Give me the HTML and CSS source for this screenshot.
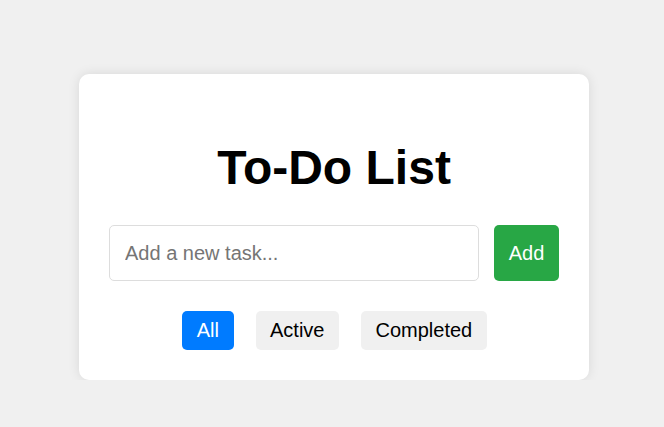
FILE: index.html
```html
<!DOCTYPE html>
<html lang="en">
<head>
<meta charset="utf-8">
<title>To-Do List</title>
<link rel="stylesheet" href="styles.css">
</head>
<body>
<main class="page">
  <section class="card">
    <h1 class="title">To-Do List</h1>
    <div class="entry">
      <input class="task-input" type="text" placeholder="Add a new task...">
      <button class="add-btn" type="button">Add</button>
    </div>
    <div class="filters">
      <button class="filter filter-active" type="button">All</button>
      <button class="filter" type="button">Active</button>
      <button class="filter" type="button">Completed</button>
    </div>
  </section>
</main>
</body>
</html>
```

FILE: styles.css
```css
* { box-sizing: border-box; }

html, body {
  margin: 0;
  padding: 0;
  background: #f0f0f0;
  font-family: "Liberation Sans", Arial, sans-serif;
}

.page {
  display: flex;
  justify-content: center;
  padding: 74px 0 0 4px;
}

.card {
  width: 510px;
  background: #ffffff;
  border-radius: 10px;
  padding: 30px;
  box-shadow: 0 0 12px rgba(0, 0, 0, 0.1);
}

.title {
  margin: 36px 0 30px;
  font-size: 48px;
  font-weight: bold;
  text-align: center;
  color: #000;
}

.entry {
  display: flex;
  gap: 15px;
}

.task-input {
  flex: 1;
  min-width: 0;
  padding: 15px;
  font-family: inherit;
  font-size: 20px;
  line-height: 24px;
  border: 1px solid #ddd;
  border-radius: 5px;
  color: #000;
  outline: none;
}

.task-input::placeholder { color: #757575; }

.add-btn {
  width: 65px;
  padding: 0;
  font-family: inherit;
  font-size: 20px;
  color: #fff;
  background: #28a745;
  border: none;
  border-radius: 5px;
}

.filters {
  display: flex;
  justify-content: center;
  gap: 22px;
  margin-top: 30px;
  padding-left: 1px;
}

.filter {
  padding: 8px 14.5px;
  font-family: inherit;
  font-size: 20px;
  line-height: 23px;
  color: #000;
  background: #f0f0f0;
  border: none;
  border-radius: 5px;
}

.filter-active {
  background: #007bff;
  color: #fff;
}
```
